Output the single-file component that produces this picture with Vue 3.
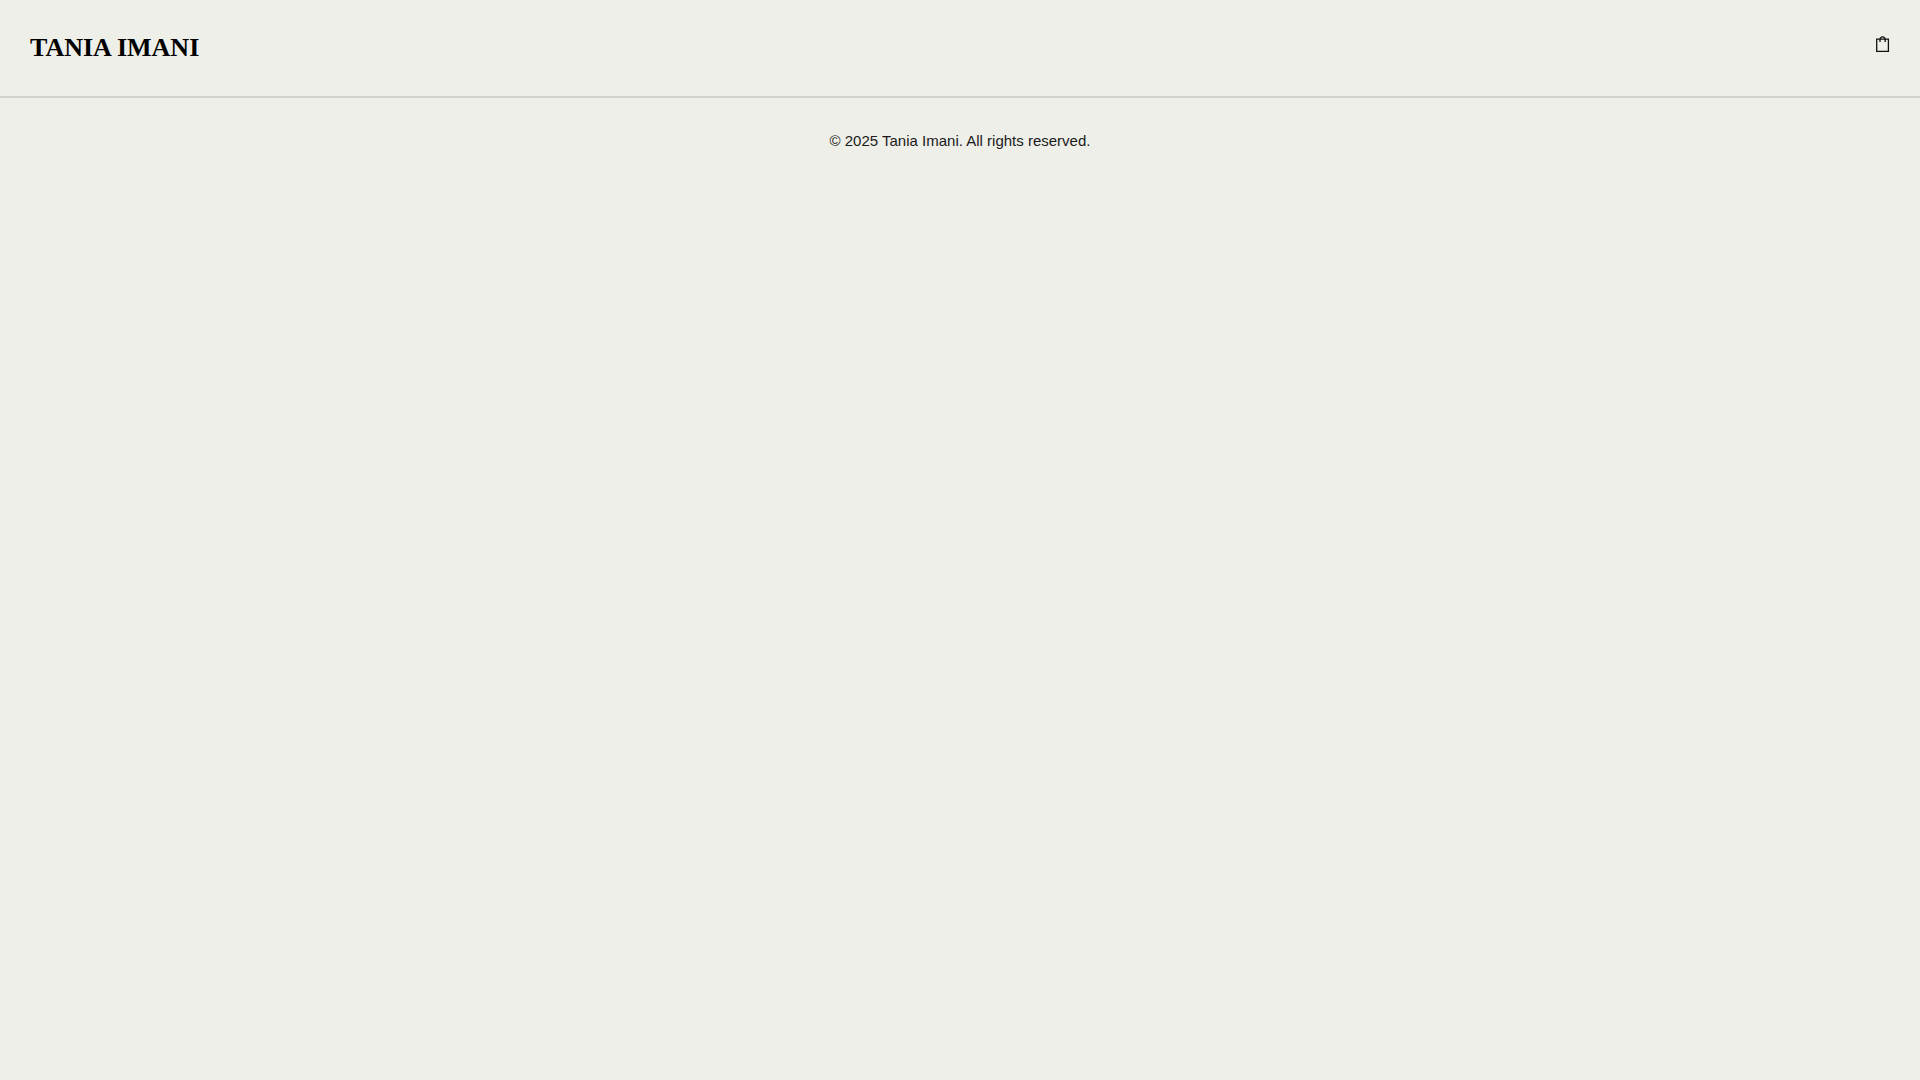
<script setup>
const brand = 'TANIA IMANI'
const year = 2025
</script>

<template>
  <div class="page">
    <header class="header">
      <a class="brand" href="#">{{ brand }}</a>
      <button class="bag" type="button" aria-label="Shopping bag">
        <svg width="14" height="17" viewBox="0 0 14 17" fill="none" stroke="currentColor" stroke-width="1.3" aria-hidden="true">
          <path d="M.7 3.2h11.7v12.2H.7z" />
          <path d="M4 6V3.6C4 2 5.1 .9 6.6 .9S9.2 2 9.2 3.6V6" />
        </svg>
      </button>
    </header>
    <footer class="footer">
      <p class="copyright">© {{ year }} Tania Imani. All rights reserved.</p>
    </footer>
  </div>
</template>

<style>
body {
  margin: 0;
  background: #eeefe9;
}
</style>

<style scoped>
.header {
  display: flex;
  justify-content: space-between;
  align-items: flex-start;
  padding: 30px;
  border-bottom: 2px solid #d2d3cd;
}

.brand {
  font: bold 26px/36px "Liberation Serif", serif;
  color: #000;
  text-decoration: none;
}

.bag {
  display: flex;
  padding: 6px 0 0;
  border: 0;
  background: none;
  color: #111;
  cursor: pointer;
}

.footer {
  padding: 30px;
  text-align: center;
}

.copyright {
  margin: 0;
  font: 15px/26px "Liberation Sans", sans-serif;
  color: #1a1a1a;
}
</style>
